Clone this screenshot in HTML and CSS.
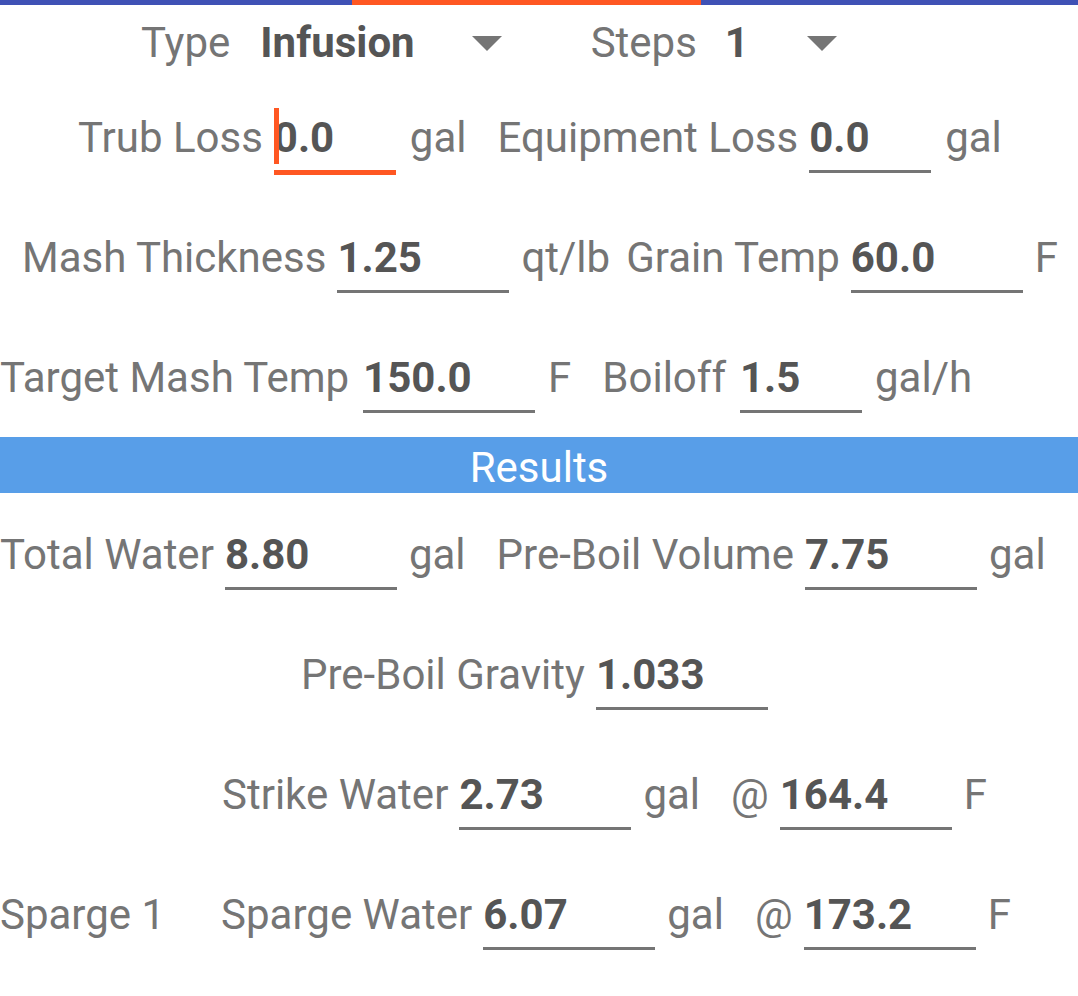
FILE: index.html
```html
<!DOCTYPE html>
<html lang="en">
<head>
    <meta charset="UTF-8">
    <meta name="viewport" content="width=device-width, initial-scale=1.0">
    <title>Mash Calculator</title>
    <link rel="stylesheet" href="styles.css">
</head>
<body>
    <div class="tabs"><span class="tab-active"></span></div>

    <div class="row row-type">
        <span class="label">Type</span>
        <div class="spinner spinner-type">
            <span class="value">Infusion</span>
            <svg class="arrow" width="30" height="15" viewBox="0 0 30 15"><polygon points="0,0 30,0 15,15"/></svg>
        </div>
        <span class="label label-steps">Steps</span>
        <div class="spinner spinner-steps">
            <span class="value">1</span>
            <svg class="arrow" width="30" height="15" viewBox="0 0 30 15"><polygon points="0,0 30,0 15,15"/></svg>
        </div>
    </div>

    <div class="row row-trub">
        <span class="label">Trub Loss</span>
        <span class="field short focused"><i class="caret"></i>0.0</span>
        <span class="unit">gal</span>
        <span class="label next">Equipment Loss</span>
        <span class="field short">0.0</span>
        <span class="unit">gal</span>
    </div>

    <div class="row row-mash">
        <span class="label">Mash Thickness</span>
        <span class="field">1.25</span>
        <span class="unit">qt/lb</span>
        <span class="label next tight">Grain Temp</span>
        <span class="field">60.0</span>
        <span class="unit">F</span>
    </div>

    <div class="row row-target">
        <span class="label">Target Mash Temp</span>
        <span class="field">150.0</span>
        <span class="unit">F</span>
        <span class="label next">Boiloff</span>
        <span class="field short">1.5</span>
        <span class="unit">gal/h</span>
    </div>

    <div class="results">Results</div>

    <div class="row row-total">
        <span class="label">Total Water</span>
        <span class="field">8.80</span>
        <span class="unit">gal</span>
        <span class="label next">Pre-Boil Volume</span>
        <span class="field">7.75</span>
        <span class="unit">gal</span>
    </div>

    <div class="row row-gravity">
        <span class="label">Pre-Boil Gravity</span>
        <span class="field">1.033</span>
    </div>

    <div class="row row-strike">
        <span class="label">Strike Water</span>
        <span class="field">2.73</span>
        <span class="unit">gal</span>
        <span class="label next">@</span>
        <span class="field">164.4</span>
        <span class="unit">F</span>
    </div>

    <div class="row row-sparge">
        <span class="label step-name">Sparge 1</span>
        <span class="label">Sparge Water</span>
        <span class="field">6.07</span>
        <span class="unit">gal</span>
        <span class="label next">@</span>
        <span class="field">173.2</span>
        <span class="unit">F</span>
    </div>
</body>
</html>
```

FILE: styles.css
```css
*{
    box-sizing: border-box;
    margin: 0;
    padding: 0;
}
body{
    width: 1078px;
    background: #fff;
    font-family: Roboto, "Noto Sans", sans-serif;
    font-size: 42px;
    line-height: 48px;
    color: #757575;
    overflow: hidden;
}
.tabs{
    height: 5px;
    background: #3f51b5;
}
.tab-active{
    display: block;
    width: 349px;
    height: 5px;
    margin-left: 352px;
    background: #ff5722;
}
.row{
    display: flex;
    align-items: baseline;
    height: 120px;
    padding-top: 14px;
    white-space: nowrap;
}
.row-type{
    height: 95px;
    padding-left: 141px;
}
.row-trub{ padding-left: 78px; }
.row-mash{ padding-left: 22px; }
.row-target{ height: 97px; }
.row-gravity{ padding-left: 301px; }
.row-strike{ padding-left: 222px; }

.label{
    margin-right: 11px;
}
.label.next{
    margin-left: 31px;
}
.label.tight{
    margin-left: 16px;
}
.row-target .label{
    margin-right: 14px;
}
.row-target .unit{
    margin-left: 13px;
}
.row-trub .unit{
    margin-left: 14px;
}
.step-name{
    margin-right: 56px;
}
.unit{
    margin-left: 12px;
}

.spinner{
    display: flex;
    align-items: center;
}
.spinner-type{
    margin-left: 19px;
}
.spinner-steps{
    margin-left: 28px;
}
.value{
    font-weight: bold;
    color: #555;
}
.arrow{
    fill: #757575;
    margin-left: 57px;
}
.spinner-steps .arrow{
    margin-left: 58px;
}
.label-steps{
    margin-left: 89px;
    margin-right: 0;
}

.field{
    position: relative;
    display: inline-block;
    width: 172px;
    padding-bottom: 8px;
    border-bottom: 3px solid #757575;
    font-weight: bold;
    color: #555;
}
.field.short{
    width: 122px;
}
.field.focused{
    border-bottom: 5px solid #ff5722;
}
.caret{
    position: absolute;
    left: 0;
    top: -6px;
    width: 5px;
    height: 56px;
    background: #ff5722;
}

.results{
    height: 56px;
    padding-top: 3px;
    margin-bottom: 24px;
    background: #589ee8;
    color: #fff;
    text-align: center;
    line-height: 56px;
}
```
